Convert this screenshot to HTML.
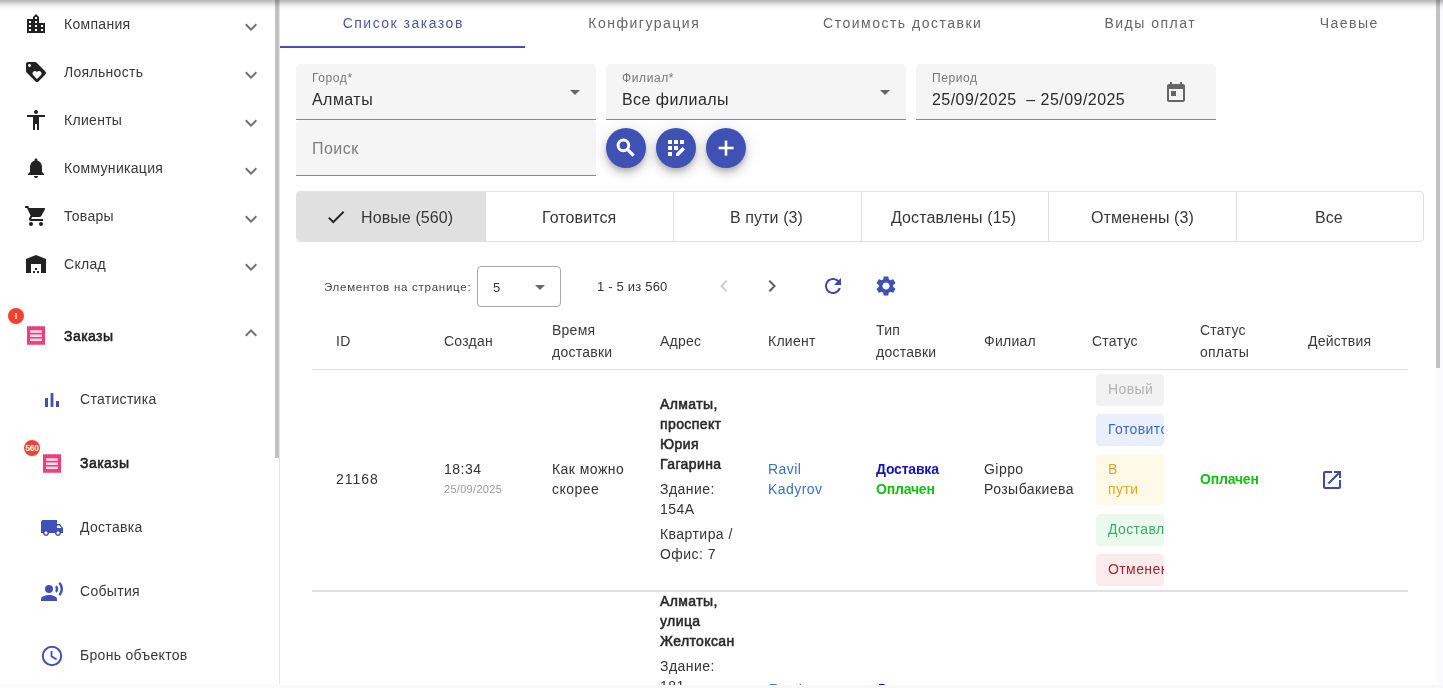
<!DOCTYPE html>
<html><head><meta charset="utf-8">
<style>
*{box-sizing:border-box;margin:0;padding:0}
html,body{width:1443px;height:688px;overflow:hidden;background:#fff;will-change:transform;font-family:"Liberation Sans",sans-serif;color:#333}
.a{position:absolute}
.t{position:absolute;white-space:nowrap;line-height:1}
#side{position:absolute;left:0;top:0;width:280px;height:688px;background:#fff}
.si{position:absolute;left:64px;font-size:14px;color:#383838;line-height:1;letter-spacing:.3px;white-space:nowrap}
.chev{position:absolute;left:239px;width:24px;height:24px}
.ic{position:absolute}
.tab{position:absolute;top:16px;font-size:14px;letter-spacing:1.5px;text-indent:1.5px;color:#666;line-height:1;white-space:nowrap;text-align:center}
.fld{position:absolute;background:#f5f5f5;border-radius:4px 4px 0 0;border-bottom:1px solid #8a8a8a}
.lbl{position:absolute;left:16px;top:8px;font-size:12px;color:#777;line-height:1;letter-spacing:.6px;white-space:nowrap}
.val{position:absolute;left:16px;top:28px;font-size:16px;color:#2b2b2b;line-height:1;letter-spacing:.45px;white-space:nowrap}
.fab{position:absolute;top:128px;width:40px;height:40px;border-radius:50%;background:#3f51b5;box-shadow:0 3px 5px -1px rgba(0,0,0,.2),0 6px 10px 0 rgba(0,0,0,.14),0 1px 18px 0 rgba(0,0,0,.12)}
.tg{position:absolute;top:191px;height:51px;font-size:16px;color:#333;line-height:1;text-align:center}
.th{position:absolute;font-size:14px;color:#3a3a3a;line-height:22px;letter-spacing:.25px;white-space:nowrap}
.td{position:absolute;font-size:14px;color:#333;line-height:20px;letter-spacing:.45px;white-space:nowrap}
.chip{position:absolute;left:1096px;width:68px;border-radius:4px;font-size:14px;line-height:20px;padding:5px 0 5px 12px;overflow:hidden;white-space:nowrap;letter-spacing:.4px}
</style></head><body>

<!-- top shadow -->
<div class="a" style="left:0;top:0;width:1443px;height:13px;background:linear-gradient(to bottom,rgba(0,0,0,.29) 0px,rgba(0,0,0,.21) 2px,rgba(0,0,0,.12) 4px,rgba(0,0,0,.055) 6px,rgba(0,0,0,.02) 8px,rgba(0,0,0,0) 12px);z-index:50"></div>

<!-- SIDEBAR -->
<div id="side">
  <!-- Компания -->
  <svg class="ic" style="left:27px;top:14px" width="18" height="19" viewBox="0 0 18 19"><path fill="#222" d="M0 5 H6 V3 L9 0 L12 3 V9 H18 V19 H0 Z"/><g fill="#fff"><rect x="8" y="3" width="2" height="2"/><rect x="2" y="7" width="2" height="2"/><rect x="8" y="7" width="2" height="2"/><rect x="2" y="11" width="2" height="2"/><rect x="8" y="11" width="2" height="2"/><rect x="14" y="11" width="2" height="2"/><rect x="2" y="15" width="2" height="2"/><rect x="8" y="15" width="2" height="2"/><rect x="14" y="15" width="2" height="2"/></g></svg>
  <div class="si" style="top:17px">Компания</div>
  <svg class="chev" style="top:15px" viewBox="0 0 24 24"><path fill="#707070" d="M16.59 8.59L12 13.17 7.41 8.59 6 10l6 6 6-6z"/></svg>

  <!-- Лояльность -->
  <svg class="ic" style="left:24px;top:60px" width="24" height="24" viewBox="0 0 24 24"><path fill="#222" d="M21.41 11.58l-9-9C12.05 2.22 11.55 2 11 2H4c-1.1 0-2 .9-2 2v7c0 .55.22 1.05.59 1.42l9 9c.36.36.86.58 1.41.58s1.05-.22 1.41-.59l7-7c.37-.36.59-.86.59-1.41s-.23-1.06-.59-1.42zM5.5 7C4.67 7 4 6.33 4 5.5S4.67 4 5.5 4 7 4.67 7 5.5 6.33 7 5.5 7zm11.27 8.27L13 19.04l-3.77-3.77c-.4-.4-.73-1.03-.73-1.77 0-1.38 1.12-2.5 2.5-2.5.7 0 1.33.28 1.78.74l.22.22.22-.22c.45-.45 1.08-.74 1.78-.74 1.38 0 2.5 1.12 2.5 2.5 0 .69-.28 1.32-.73 1.77z"/></svg>
  <div class="si" style="top:65px">Лояльность</div>
  <svg class="chev" style="top:63px" viewBox="0 0 24 24"><path fill="#707070" d="M16.59 8.59L12 13.17 7.41 8.59 6 10l6 6 6-6z"/></svg>

  <!-- Клиенты -->
  <svg class="ic" style="left:24px;top:108px" width="24" height="24" viewBox="0 0 24 24"><path fill="#222" d="M12 2c1.1 0 2 .9 2 2s-.9 2-2 2-2-.9-2-2 .9-2 2-2zm9 7h-6v13h-2v-6h-2v6H9V9H3V7h18v2z"/></svg>
  <div class="si" style="top:113px">Клиенты</div>
  <svg class="chev" style="top:111px" viewBox="0 0 24 24"><path fill="#707070" d="M16.59 8.59L12 13.17 7.41 8.59 6 10l6 6 6-6z"/></svg>

  <!-- Коммуникация -->
  <svg class="ic" style="left:24px;top:156px" width="24" height="24" viewBox="0 0 24 24"><path fill="#222" d="M12 22c1.1 0 2-.9 2-2h-4c0 1.1.89 2 2 2zm6-6v-5c0-3.07-1.64-5.64-4.5-6.32V4c0-.83-.67-1.5-1.5-1.5s-1.5.67-1.5 1.5v.68C7.63 5.36 6 7.92 6 11v5l-2 2v1h16v-1l-2-2z"/></svg>
  <div class="si" style="top:161px">Коммуникация</div>
  <svg class="chev" style="top:159px" viewBox="0 0 24 24"><path fill="#707070" d="M16.59 8.59L12 13.17 7.41 8.59 6 10l6 6 6-6z"/></svg>

  <!-- Товары -->
  <svg class="ic" style="left:24px;top:204px" width="24" height="24" viewBox="0 0 24 24"><path fill="#222" d="M7 18c-1.1 0-1.99.9-1.99 2S5.9 22 7 22s2-.9 2-2-.9-2-2-2zM1 2v2h2l3.6 7.59-1.35 2.45c-.16.28-.25.61-.25.96 0 1.1.9 2 2 2h12v-2H7.42c-.14 0-.25-.11-.25-.25l.03-.12.9-1.63h7.45c.75 0 1.41-.41 1.75-1.03l3.58-6.49A1.003 1.003 0 0 0 20 4H5.21l-.94-2H1zm16 16c-1.1 0-1.99.9-1.99 2s.89 2 1.99 2 2-.9 2-2-.9-2-2-2z"/></svg>
  <div class="si" style="top:209px">Товары</div>
  <svg class="chev" style="top:207px" viewBox="0 0 24 24"><path fill="#707070" d="M16.59 8.59L12 13.17 7.41 8.59 6 10l6 6 6-6z"/></svg>

  <!-- Склад -->
  <svg class="ic" style="left:26px;top:255px" width="20" height="18" viewBox="0 0 20 18"><path fill="#222" d="M0 4 L10 0 L20 4 V18 H15 V9 H5 V18 H0 Z"/><g fill="#222"><rect x="9" y="13" width="2" height="2"/><rect x="7" y="16" width="2" height="2"/><rect x="11" y="16" width="2" height="2"/></g></svg>
  <div class="si" style="top:257px">Склад</div>
  <svg class="chev" style="top:255px" viewBox="0 0 24 24"><path fill="#707070" d="M16.59 8.59L12 13.17 7.41 8.59 6 10l6 6 6-6z"/></svg>

  <!-- Заказы parent -->
  <div class="a" style="left:8px;top:308px;width:16px;height:16px;border-radius:50%;background:#ef4230;color:#fff;font-size:9px;font-weight:bold;text-align:center;line-height:16px">!</div>
  <svg class="ic" style="left:27px;top:326px" width="18" height="19" viewBox="0 0 18 19"><path fill="#ec407a" d="M0 0.6 L0.75 0 L1.5 0.6 L2.25 0 L3 0.6 L3.75 0 L4.5 0.6 L5.25 0 L6 0.6 L6.75 0 L7.5 0.6 L8.25 0 L9 0.6 L9.75 0 L10.5 0.6 L11.25 0 L12 0.6 L12.75 0 L13.5 0.6 L14.25 0 L15 0.6 L15.75 0 L16.5 0.6 L17.25 0 L18 0.6 V18.4 L17.25 19 L16.5 18.4 L15.75 19 L15 18.4 L14.25 19 L13.5 18.4 L12.75 19 L12 18.4 L11.25 19 L10.5 18.4 L9.75 19 L9 18.4 L8.25 19 L7.5 18.4 L6.75 19 L6 18.4 L5.25 19 L4.5 18.4 L3.75 19 L3 18.4 L2.25 19 L1.5 18.4 L0.75 19 L0 18.4 Z"/><g fill="#f8dcf0"><rect x="3" y="4.3" width="12" height="2.5"/><rect x="3" y="8.5" width="12" height="2.5"/><rect x="3" y="12.6" width="12" height="2.5"/></g></svg>
  <div class="si" style="top:329px;color:#222;-webkit-text-stroke:.55px #222;letter-spacing:.45px">Заказы</div>
  <svg class="chev" style="top:321px" viewBox="0 0 24 24"><path fill="#707070" d="M12 8l-6 6 1.41 1.41L12 10.83l4.59 4.58L18 14z"/></svg>

  <!-- Статистика -->
  <svg class="ic" style="left:45px;top:391px" width="16" height="16" viewBox="0 0 16 16"><g fill="#3f51b5"><rect x="0" y="7" width="3" height="9"/><rect x="5.6" y="2" width="2.8" height="14"/><rect x="11" y="10" width="3" height="6"/></g></svg>
  <div class="si" style="left:80px;top:392px">Статистика</div>

  <!-- Заказы child -->
  <div class="a" style="left:24px;top:440px;width:16px;height:16px;border-radius:50%;background:#ef4230;color:#fff;font-size:8.5px;font-weight:bold;text-align:center;line-height:16px;letter-spacing:-0.3px">560</div>
  <svg class="ic" style="left:43px;top:454px" width="18" height="19" viewBox="0 0 18 19"><path fill="#ec407a" d="M0 0.6 L0.75 0 L1.5 0.6 L2.25 0 L3 0.6 L3.75 0 L4.5 0.6 L5.25 0 L6 0.6 L6.75 0 L7.5 0.6 L8.25 0 L9 0.6 L9.75 0 L10.5 0.6 L11.25 0 L12 0.6 L12.75 0 L13.5 0.6 L14.25 0 L15 0.6 L15.75 0 L16.5 0.6 L17.25 0 L18 0.6 V18.4 L17.25 19 L16.5 18.4 L15.75 19 L15 18.4 L14.25 19 L13.5 18.4 L12.75 19 L12 18.4 L11.25 19 L10.5 18.4 L9.75 19 L9 18.4 L8.25 19 L7.5 18.4 L6.75 19 L6 18.4 L5.25 19 L4.5 18.4 L3.75 19 L3 18.4 L2.25 19 L1.5 18.4 L0.75 19 L0 18.4 Z"/><g fill="#f8dcf0"><rect x="3" y="4.3" width="12" height="2.5"/><rect x="3" y="8.5" width="12" height="2.5"/><rect x="3" y="12.6" width="12" height="2.5"/></g></svg>
  <div class="si" style="left:80px;top:456px;color:#222;-webkit-text-stroke:.55px #222;letter-spacing:.45px">Заказы</div>

  <!-- Доставка -->
  <svg class="ic" style="left:40px;top:516px" width="24" height="24" viewBox="0 0 24 24"><path fill="#3f51b5" d="M20 8h-3V4H3c-1.1 0-2 .9-2 2v11h2c0 1.66 1.34 3 3 3s3-1.34 3-3h6c0 1.66 1.34 3 3 3s3-1.34 3-3h2v-5l-3-4zM6 18.5c-.83 0-1.5-.67-1.5-1.5s.67-1.5 1.5-1.5 1.5.67 1.5 1.5-.67 1.5-1.5 1.5zm13.5-9l1.96 2.5H17V9.5h2.5zm-1.5 9c-.83 0-1.5-.67-1.5-1.5s.67-1.5 1.5-1.5 1.5.67 1.5 1.5-.67 1.5-1.5 1.5z"/></svg>
  <div class="si" style="left:80px;top:520px">Доставка</div>

  <!-- События -->
  <svg class="ic" style="left:40px;top:580px" width="24" height="24" viewBox="0 0 24 24"><g fill="#3f51b5"><circle cx="9" cy="9" r="4"/><path d="M9 15c-2.67 0-8 1.34-8 4v2h16v-2c0-2.66-5.33-4-8-4z"/><path d="M16.76 5.36l-1.68 1.69c.84 1.18.84 2.71 0 3.89l1.68 1.69c2.02-2.02 2.02-5.07 0-7.27z"/><path d="M20.07 2l-1.63 1.63c2.77 3.02 2.77 7.56 0 10.74L20.07 16c3.9-3.89 3.91-9.95 0-14z"/></g></svg>
  <div class="si" style="left:80px;top:584px">События</div>

  <!-- Бронь объектов -->
  <svg class="ic" style="left:41px;top:645px" width="22" height="22" viewBox="0 0 22 22"><circle cx="11" cy="11" r="9.2" fill="none" stroke="#3f51b5" stroke-width="2"/><path d="M10.5 6 V11.2 L15.6 14.6" fill="none" stroke="#3f51b5" stroke-width="1.8"/></svg>
  <div class="si" style="left:80px;top:648px">Бронь объектов</div>

  <!-- scrollbar -->
  <div class="a" style="left:279px;top:0;width:1px;height:688px;background:#e6e6e6"></div>
  <div class="a" style="left:275px;top:0;width:4px;height:458px;background:#c1c1c1"></div>
</div>

<!-- MAIN -->
<div class="tab" style="left:280px;width:245px;color:#4a56a6">Список заказов</div>
<div class="a" style="left:280px;top:46px;width:245px;height:2px;background:#3f51b5"></div>
<div class="tab" style="left:525px;width:237px">Конфигурация</div>
<div class="tab" style="left:762px;width:280px">Стоимость доставки</div>
<div class="tab" style="left:1042px;width:215px">Виды оплат</div>
<div class="tab" style="left:1257px;width:183px">Чаевые</div>

<!-- fields -->
<div class="fld" style="left:296px;top:64px;width:300px;height:56px">
  <div class="lbl">Город*</div><div class="val">Алматы</div>
  <svg class="a" style="left:274px;top:26px" width="10" height="5" viewBox="0 0 10 5"><path d="M0 0 L10 0 L5 5Z" fill="#666"/></svg>
</div>
<div class="fld" style="left:296px;top:120px;width:300px;height:56px">
  <div class="val" style="top:21px;color:#7d7d7d">Поиск</div>
</div>
<div class="fld" style="left:606px;top:64px;width:300px;height:56px">
  <div class="lbl">Филиал*</div><div class="val">Все филиалы</div>
  <svg class="a" style="left:274px;top:26px" width="10" height="5" viewBox="0 0 10 5"><path d="M0 0 L10 0 L5 5Z" fill="#666"/></svg>
</div>
<div class="fld" style="left:916px;top:64px;width:300px;height:56px">
  <div class="lbl">Период</div><div class="val">25/09/2025 &nbsp;– 25/09/2025</div>
  <svg class="a" style="left:248px;top:17px" width="24" height="24" viewBox="0 0 24 24"><path fill="#666" d="M19 3h-1V1h-2v2H8V1H6v2H5c-1.11 0-1.99.9-1.99 2L3 19c0 1.1.89 2 2 2h14c1.1 0 2-.9 2-2V5c0-1.1-.9-2-2-2zm0 16H5V8h14v11zM7 10h5v5H7z"/></svg>
</div>

<!-- fabs -->
<div class="fab" style="left:606px"><svg class="a" style="left:0;top:0" width="40" height="40" viewBox="0 0 40 40"><circle cx="17.4" cy="17.4" r="5.3" fill="none" stroke="#fff" stroke-width="3"/><path d="M21.2 21.2 L27.6 27.6" stroke="#fff" stroke-width="3.2"/></svg></div>
<div class="fab" style="left:656px"><svg class="a" style="left:8px;top:8px" width="24" height="24" viewBox="0 0 24 24"><g fill="#fff"><rect x="4" y="4" width="4" height="4"/><rect x="10" y="4" width="4" height="4"/><rect x="16" y="4" width="4" height="4"/><rect x="4" y="10" width="4" height="4"/><rect x="10" y="10" width="4" height="4"/><rect x="4" y="16" width="4" height="4"/><path d="M12 20 V17.5 L18.5 11 L21 13.5 L14.5 20 Z"/></g></svg></div>
<div class="fab" style="left:706px"><svg class="a" style="left:0;top:0" width="40" height="40" viewBox="0 0 40 40"><g fill="#fff"><rect x="12.6" y="18.7" width="15" height="2.6"/><rect x="18.7" y="12.6" width="2.6" height="15"/></g></svg></div>

<!-- toggle group -->
<div class="a" style="left:296px;top:191px;width:1128px;height:51px;border:1px solid #e0e0e0;border-radius:4px;overflow:hidden">
  <div class="a" style="left:0;top:0;width:188px;height:49px;background:#e0e0e0"></div>
  <div class="a" style="left:188px;top:0;width:1px;height:49px;background:#e0e0e0"></div>
  <div class="a" style="left:376px;top:0;width:1px;height:49px;background:#e0e0e0"></div>
  <div class="a" style="left:564px;top:0;width:1px;height:49px;background:#e0e0e0"></div>
  <div class="a" style="left:751px;top:0;width:1px;height:49px;background:#e0e0e0"></div>
  <div class="a" style="left:939px;top:0;width:1px;height:49px;background:#e0e0e0"></div>
</div>
<svg class="a" style="left:325px;top:206px" width="22" height="22" viewBox="0 0 24 24"><path fill="#222" d="M9 16.17L4.83 12l-1.42 1.41L9 19 21 7l-1.41-1.41z"/></svg>
<div class="t" style="left:361px;top:210px;font-size:16px;color:#363636;letter-spacing:.1px">Новые (560)</div>
<div class="t" style="left:542px;top:210px;font-size:16px;color:#363636;letter-spacing:.1px">Готовится</div>
<div class="t" style="left:730px;top:210px;font-size:16px;color:#363636;letter-spacing:.1px">В пути (3)</div>
<div class="t" style="left:891px;top:210px;font-size:16px;color:#363636;letter-spacing:.1px">Доставлены (15)</div>
<div class="t" style="left:1091px;top:210px;font-size:16px;color:#363636;letter-spacing:.1px">Отменены (3)</div>
<div class="t" style="left:1315px;top:210px;font-size:16px;color:#363636;letter-spacing:.1px">Все</div>

<!-- paginator -->
<div class="t" style="left:324px;top:282px;font-size:11.5px;color:#444;letter-spacing:.74px">Элементов на странице:</div>
<div class="a" style="left:477px;top:266px;width:84px;height:41px;border:1px solid #a8a8a8;border-radius:4px"></div>
<div class="t" style="left:493px;top:281px;font-size:13px;color:#333">5</div>
<svg class="a" style="left:535px;top:285px" width="10" height="5" viewBox="0 0 10 5"><path d="M0 0 L10 0 L5 5Z" fill="#666"/></svg>
<div class="t" style="left:597px;top:280px;font-size:13px;color:#333;letter-spacing:.2px">1 - 5 из 560</div>
<svg class="a" style="left:712px;top:274px" width="24" height="24" viewBox="0 0 24 24"><path fill="#d0d0d0" d="M15.41 7.41L14 6l-6 6 6 6 1.41-1.41L10.83 12z"/></svg>
<svg class="a" style="left:760px;top:274px" width="24" height="24" viewBox="0 0 24 24"><path fill="#606060" d="M10 6L8.59 7.41 13.17 12l-4.58 4.59L10 18l6-6z"/></svg>
<svg class="a" style="left:821px;top:274px" width="24" height="24" viewBox="0 0 24 24"><path fill="#3a48a8" d="M17.65 6.35C16.2 4.9 14.21 4 12 4c-4.42 0-7.99 3.58-7.99 8s3.57 8 7.99 8c3.73 0 6.84-2.55 7.73-6h-2.08c-.82 2.33-3.04 4-5.65 4-3.31 0-6-2.69-6-6s2.69-6 6-6c1.66 0 3.14.69 4.22 1.78L13 11h7V4l-2.35 2.35z"/></svg>
<svg class="a" style="left:874px;top:274px" width="24" height="24" viewBox="0 0 24 24"><path fill="#3f51b5" d="M19.14 12.94c.04-.3.06-.61.06-.94 0-.32-.02-.64-.07-.94l2.03-1.58a.49.49 0 0 0 .12-.61l-1.92-3.32a.488.488 0 0 0-.59-.22l-2.39.96c-.5-.38-1.03-.7-1.62-.94l-.36-2.54a.484.484 0 0 0-.48-.41h-3.84c-.24 0-.43.17-.47.41l-.36 2.54c-.59.24-1.13.57-1.62.94l-2.39-.96c-.22-.08-.47 0-.59.22L2.74 8.87c-.12.21-.08.47.12.61l2.03 1.58c-.05.3-.09.63-.09.94s.02.64.07.94l-2.03 1.58a.49.49 0 0 0-.12.61l1.92 3.32c.12.22.37.29.59.22l2.39-.96c.5.38 1.03.7 1.62.94l.36 2.54c.05.24.24.41.48.41h3.84c.24 0 .44-.17.47-.41l.36-2.54c.59-.24 1.13-.56 1.62-.94l2.39.96c.22.08.47 0 .59-.22l1.92-3.32c.12-.22.07-.47-.12-.61l-2.01-1.58zM12 15.6c-1.98 0-3.6-1.62-3.6-3.6s1.62-3.6 3.6-3.6 3.6 1.62 3.6 3.6-1.62 3.6-3.6 3.6z"/></svg>

<!-- table header -->
<div class="th" style="left:336px;top:330px">ID</div>
<div class="th" style="left:444px;top:330px">Создан</div>
<div class="th" style="left:552px;top:319px">Время<br>доставки</div>
<div class="th" style="left:660px;top:330px">Адрес</div>
<div class="th" style="left:768px;top:330px">Клиент</div>
<div class="th" style="left:876px;top:319px">Тип<br>доставки</div>
<div class="th" style="left:984px;top:330px">Филиал</div>
<div class="th" style="left:1092px;top:330px">Статус</div>
<div class="th" style="left:1200px;top:319px">Статус<br>оплаты</div>
<div class="th" style="left:1308px;top:330px">Действия</div>
<div class="a" style="left:312px;top:369px;width:1096px;height:1px;background:#e0e0e0"></div>

<!-- row 1 -->
<div class="td" style="left:336px;top:469px;letter-spacing:1px">21168</div>
<div class="td" style="left:444px;top:459px;letter-spacing:.5px">18:34</div>
<div class="td" style="left:444px;top:482px;font-size:11px;line-height:14px;color:#999;letter-spacing:.3px">25/09/2025</div>
<div class="td" style="left:552px;top:459px">Как можно<br>скорее</div>
<div class="td" style="left:660px;top:394px;color:#2a2a2a;-webkit-text-stroke:.55px #2a2a2a;letter-spacing:.4px">Алматы,<br>проспект<br>Юрия<br>Гагарина</div>
<div class="td" style="left:660px;top:479px">Здание:<br>154А</div>
<div class="td" style="left:660px;top:524px">Квартира /<br>Офис: 7</div>
<div class="td" style="left:768px;top:459px;color:#3a70c8">Ravil<br>Kadyrov</div>
<div class="td" style="left:876px;top:459px;font-weight:bold;color:#1414b4;letter-spacing:-.2px">Доставка</div>
<div class="td" style="left:876px;top:479px;font-weight:bold;color:#12c012;letter-spacing:-.2px">Оплачен</div>
<div class="td" style="left:984px;top:459px">Gippo<br>Розыбакиева</div>
<div class="chip" style="top:374px;height:32px;background:#f2f2f2;color:#b3b3b3">Новый</div>
<div class="chip" style="top:414px;height:32px;background:#e9effc;color:#3a6bc4">Готовится</div>
<div class="chip" style="top:454px;height:51px;background:#fff9e8;color:#e2a81e;white-space:normal">В<br>пути</div>
<div class="chip" style="top:514px;height:32px;background:#ebfaee;color:#3aae5c">Доставлен</div>
<div class="chip" style="top:554px;height:32px;background:#fcebed;color:#a9252e">Отменен</div>
<div class="td" style="left:1200px;top:469px;font-weight:bold;color:#12c012;letter-spacing:-.2px">Оплачен</div>
<svg class="a" style="left:1320px;top:468px" width="24" height="24" viewBox="0 0 24 24"><path fill="#3d4aa6" d="M19 19H5V5h7V3H5c-1.11 0-2 .9-2 2v14c0 1.1.89 2 2 2h14c1.1 0 2-.9 2-2v-7h-2v7zM14 3v2h3.59l-9.83 9.83 1.41 1.41L19 6.41V10h2V3h-7z"/></svg>
<div class="a" style="left:312px;top:590px;width:1096px;height:2px;background:#e0e0e0"></div>

<!-- row 2 (cut) -->
<div class="td" style="left:660px;top:591px;color:#2a2a2a;-webkit-text-stroke:.55px #2a2a2a;letter-spacing:.4px">Алматы,<br>улица<br>Желтоксан</div>
<div class="td" style="left:660px;top:656px">Здание:<br>181</div>

<!-- bottom bar -->
<div class="a" style="left:700px;top:684px;width:300px;height:1px;overflow:hidden"><div class="td" style="left:69px;top:-5px;color:#3a70c8">Ravil</div><div class="td" style="left:176px;top:-5px;font-weight:bold;color:#1414b4;letter-spacing:-.2px">Доставка</div></div>
<div class="a" style="left:0;top:684px;width:280px;height:4px;background:#fbfbfb;z-index:60"></div>
<div class="a" style="left:280px;top:685px;width:1163px;height:3px;background:#f8f8f8;z-index:60"></div>

<!-- right scrollbar -->
<div class="a" style="left:1437px;top:0;width:6px;height:688px;background:#fbfbfd;z-index:45"></div>
<div class="a" style="left:1436px;top:0;width:4px;height:368px;background:#c1c1c1;z-index:46"></div>
</body></html>
